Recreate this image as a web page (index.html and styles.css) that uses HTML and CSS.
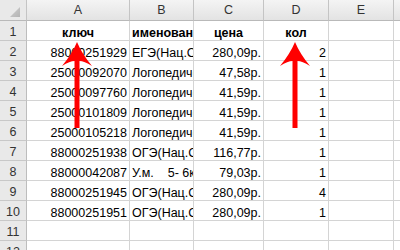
FILE: index.html
```html
<!DOCTYPE html>
<html lang="ru">
<head>
<meta charset="utf-8">
<link rel="stylesheet" href="styles.css">
</head>
<body>
<div class="sheet">
  <table class="grid">
    <colgroup>
      <col class="c-rh"><col class="c-a"><col class="c-b"><col class="c-c"><col class="c-d"><col class="c-e"><col class="c-f">
    </colgroup>
    <thead>
      <tr class="colhead">
        <th class="corner"><span class="tri"></span></th>
        <th>A</th><th>B</th><th>C</th><th>D</th><th>E</th><th></th>
      </tr>
    </thead>
    <tbody>
      <tr><th>1</th><td class="b ctr">ключ</td><td class="b">именование</td><td class="b ctr">цена</td><td class="b ctr">кол</td><td></td><td></td></tr>
      <tr><th>2</th><td class="r">88000251929</td><td>ЕГЭ(Нац.Стандарт)</td><td class="r">280,09р.</td><td class="r">2</td><td></td><td></td></tr>
      <tr><th>3</th><td class="r">25000092070</td><td>Логопедический</td><td class="r">47,58р.</td><td class="r">1</td><td></td><td></td></tr>
      <tr><th>4</th><td class="r">25000097760</td><td>Логопедический</td><td class="r">41,59р.</td><td class="r">1</td><td></td><td></td></tr>
      <tr><th>5</th><td class="r">25000101809</td><td>Логопедический</td><td class="r">41,59р.</td><td class="r">1</td><td></td><td></td></tr>
      <tr><th>6</th><td class="r">25000105218</td><td>Логопедический</td><td class="r">41,59р.</td><td class="r">1</td><td></td><td></td></tr>
      <tr><th>7</th><td class="r">88000251938</td><td>ОГЭ(Нац.Стандарт)</td><td class="r">116,77р.</td><td class="r">1</td><td></td><td></td></tr>
      <tr><th>8</th><td class="r">88000042087</td><td class="pre">У.м.    5- 6кл</td><td class="r">79,03р.</td><td class="r">1</td><td></td><td></td></tr>
      <tr><th>9</th><td class="r">88000251945</td><td>ОГЭ(Нац.Стандарт)</td><td class="r">280,09р.</td><td class="r">4</td><td></td><td></td></tr>
      <tr><th>10</th><td class="r">88000251951</td><td>ОГЭ(Нац.Стандарт)</td><td class="r">280,09р.</td><td class="r">1</td><td></td><td></td></tr>
      <tr><th>11</th><td></td><td></td><td></td><td></td><td></td><td></td></tr>
      <tr><th>12</th><td></td><td></td><td></td><td></td><td></td><td></td></tr>
    </tbody>
  </table>
  <svg class="arrow arrow-1" width="30" height="86" viewBox="0 0 30 86"><path d="M15 0 Q10 12 0 24 Q8 19 12.5 19 L12.5 86 L17.5 86 L17.5 19 Q22 19 30 24 Q20 12 15 0Z" fill="#ff0000"/></svg>
  <svg class="arrow arrow-2" width="30" height="86" viewBox="0 0 30 86"><path d="M15 0 Q10 12 0 24 Q8 19 12.5 19 L12.5 86 L17.5 86 L17.5 19 Q22 19 30 24 Q20 12 15 0Z" fill="#ff0000"/></svg>
</div>
</body>
</html>
```
FILE: styles.css
```css
html, body {
  margin: 0;
  padding: 0;
  background: #ffffff;
  overflow: hidden;
}
.sheet {
  position: relative;
  width: 400px;
  height: 250px;
  overflow: hidden;
}
.grid {
  border-collapse: separate;
  border-spacing: 0;
  table-layout: fixed;
  width: 440px;
  font-family: "Liberation Sans", Arial, sans-serif;
  font-size: 12.5px;
  color: #000;
}
.c-rh { width: 27px; }
.c-a { width: 103px; }
.c-b { width: 64px; }
.c-c { width: 70px; }
.c-d { width: 65px; }
.c-e { width: 65px; }
.c-f { width: 46px; }
.grid th, .grid td {
  box-sizing: border-box;
  height: 20px;
  padding: 0 2px;
  line-height: 14px;
  border-right: 1px solid #d4d4d4;
  border-bottom: 1px solid #d4d4d4;
  white-space: nowrap;
  overflow: hidden;
  vertical-align: bottom;
  text-align: left;
  font-weight: normal;
}
.grid tbody th {
  background: #e9e9e9;
  color: #333;
  text-align: center;
  vertical-align: middle;
  padding-top: 3px;
  border-right: 1px solid #bdbdbd;
  border-bottom: 1px solid #c8c8c8;
}
.colhead th {
  height: 21px;
  background: linear-gradient(#f4f4f4, #e3e3e3);
  color: #333;
  text-align: center;
  vertical-align: middle;
  border-right: 1px solid #c4c4c4;
  border-bottom: 1px solid #b9b9b9;
}
.colhead th.corner {
  position: relative;
  background: #e9e9e9;
}
.tri {
  position: absolute;
  left: 10px;
  top: 7px;
  width: 10px;
  height: 10px;
  background: linear-gradient(135deg, #d0d0d0, #b4b4b4);
  clip-path: polygon(100% 0, 100% 100%, 0 100%);
}
.grid td.r { text-align: right; }
.grid td.ctr { text-align: center; }
.grid td.b { font-weight: bold; }
.grid td.pre { white-space: pre; }
.arrow {
  position: absolute;
  top: 42px;
}
.arrow-1 { left: 62px; }
.arrow-2 { left: 280px; }
```
